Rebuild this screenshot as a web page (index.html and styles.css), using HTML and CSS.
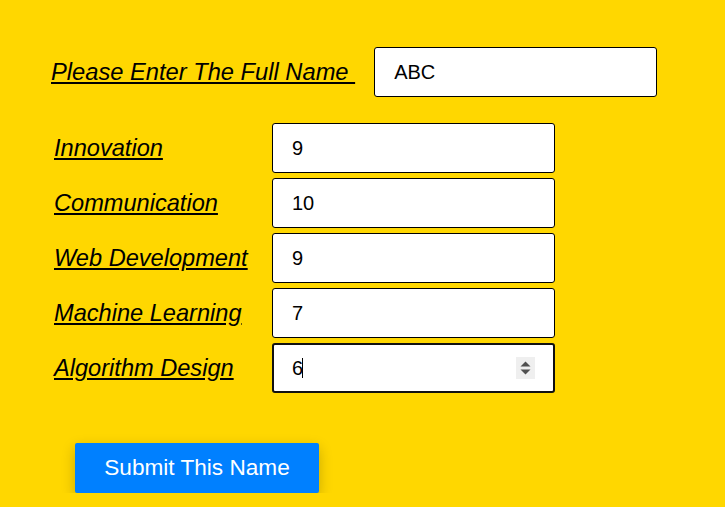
FILE: index.html
```html
<!DOCTYPE html>
<html>
<head>
<meta charset="utf-8">
<link rel="stylesheet" href="styles.css">
</head>
<body>
<form class="page">
  <div class="name-row">
    <label class="lbl name-lbl" for="fullname">Please Enter The Full Name </label>
    <input class="field" id="fullname" type="text" value="ABC">
  </div>
  <div class="scores">
    <label class="lbl" for="s1">Innovation</label>
    <input class="field" id="s1" type="number" value="9">
    <label class="lbl" for="s2">Communication</label>
    <input class="field" id="s2" type="number" value="10">
    <label class="lbl" for="s3">Web Development</label>
    <input class="field" id="s3" type="number" value="9">
    <label class="lbl" for="s4">Machine Learning</label>
    <input class="field" id="s4" type="number" value="7">
    <label class="lbl" for="s5">Algorithm Design</label>
    <span class="field-wrap">
      <input class="field focused" id="s5" type="number" value="6">
      <span class="caret"></span>
      <span class="spinner">
        <svg width="19" height="22" viewBox="0 0 19 22">
          <path d="M4.5 9.5 L9.5 4.5 L14.5 9.5 Z" fill="#505050"/>
          <path d="M4.5 12.5 L14.5 12.5 L9.5 17.5 Z" fill="#505050"/>
        </svg>
      </span>
    </span>
  </div>
  <div class="actions">
    <button class="submit" type="button">Submit This Name</button>
  </div>
</form>
</body>
</html>
```
FILE: styles.css
```css
html, body {
  margin: 0;
  padding: 0;
  background: #ffd700;
  font-family: "Liberation Sans", Arial, sans-serif;
}
.page {
  padding: 47px 0 0 51px;
}
.name-row {
  display: flex;
  align-items: center;
  gap: 19px;
}
.lbl {
  font-style: italic;
  text-decoration: underline;
  font-size: 23.6px;
  color: #000;
  white-space: pre;
}
.name-lbl {
  font-size: 23.7px;
}
.field {
  box-sizing: border-box;
  width: 283px;
  height: 50px;
  border: 1px solid #000;
  border-radius: 3px;
  background: #fff;
  padding: 0 12px 0 19px;
  font-family: "Liberation Sans", Arial, sans-serif;
  font-size: 20px;
  color: #000;
  margin: 0;
  -moz-appearance: textfield;
}
.field::-webkit-inner-spin-button,
.field::-webkit-outer-spin-button {
  -webkit-appearance: none;
  margin: 0;
}
.field:focus {
  outline: none;
}
.field.focused {
  border: 2px solid #111;
  padding-left: 18px;
}
.field-wrap {
  position: relative;
  display: block;
  width: 283px;
  height: 50px;
}
.caret {
  position: absolute;
  left: 30px;
  top: 15px;
  width: 1px;
  height: 20px;
  background: #000;
}
.spinner {
  position: absolute;
  left: 244px;
  top: 14px;
  width: 19px;
  height: 22px;
  background: #efefef;
  display: flex;
}
.scores {
  margin-top: 26px;
  margin-left: 3px;
  display: grid;
  grid-template-columns: 218px 283px;
  row-gap: 5px;
  align-items: center;
}
.actions {
  margin-top: 50px;
  padding-left: 24px;
}
.submit {
  display: block;
  width: 244px;
  height: 50px;
  border: none;
  border-radius: 2px;
  background: #0080ff;
  color: #fff;
  font-family: "Liberation Sans", Arial, sans-serif;
  font-size: 22.6px;
  box-shadow: 0 5px 14px rgba(0, 0, 0, 0.22);
}
```
